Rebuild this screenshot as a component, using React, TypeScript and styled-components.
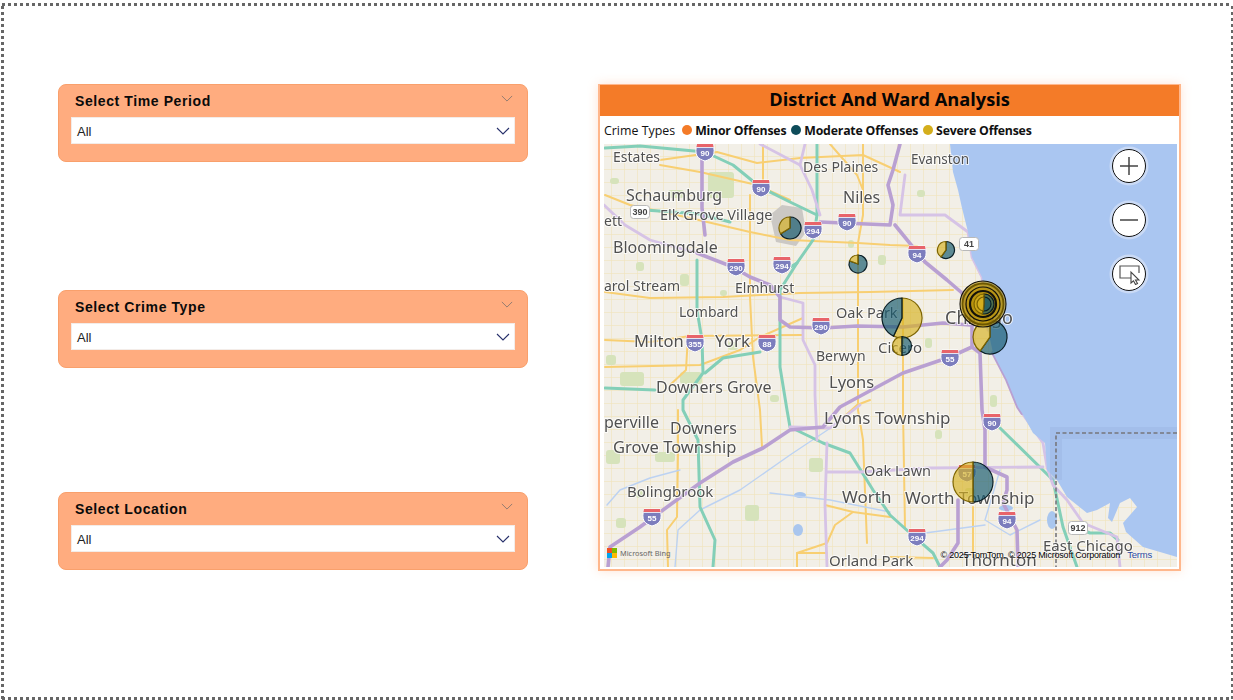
import React from 'react';
import styled, { createGlobalStyle } from 'styled-components';

const GlobalStyle = createGlobalStyle`
  html, body { margin: 0; padding: 0; background: #fff; }
  body { font-family: "Liberation Sans", Arial, sans-serif; }
`;

const Page = styled.div`
  width: 1233px;
  height: 700px;
  box-sizing: border-box;
  padding: 84px 52px 0 58px;
  display: flex;
  gap: 70px;
  overflow: hidden;
  background-color: #fff;
  background-image:
    repeating-linear-gradient(90deg, #666 0 3px, transparent 3px 6px),
    repeating-linear-gradient(90deg, #666 0 3px, transparent 3px 6px),
    repeating-linear-gradient(0deg, #666 0 3px, transparent 3px 6px),
    repeating-linear-gradient(0deg, #666 0 3px, transparent 3px 6px);
  background-size: 1230px 3px, 1230px 3px, 3px 696px, 2px 696px;
  background-position: 2px 3px, 2px 697px, 1px 3px, 1231px 3px;
  background-repeat: no-repeat;
`;

const FilterColumn = styled.div`
  width: 470px;
  display: flex;
  flex-direction: column;
`;

const FilterCard = styled.div<{ $top?: number }>`
  height: 78px;
  box-sizing: border-box;
  margin-top: ${(p) => p.$top ?? 0}px;
  padding: 6px 12px 0 12px;
  background: #ffac7f;
  border: 1px solid #f9a06c;
  border-radius: 8px;
`;

const FilterHeader = styled.div`
  height: 26px;
  padding: 0 2px 0 4px;
  display: flex;
  justify-content: space-between;
  align-items: flex-start;
`;

const FilterTitle = styled.span`
  font-size: 14px;
  font-weight: 700;
  line-height: 21px;
  letter-spacing: 0.6px;
  color: #0a0a0a;
`;

const FilterSelect = styled.div`
  height: 27px;
  box-sizing: border-box;
  display: flex;
  align-items: center;
  justify-content: space-between;
  padding: 2px 4px 0 5px;
  background: #fff;
  border: 1px solid #f3ece8;
  font-size: 13px;
  color: #222;
`;

const Chevron = styled.svg<{ $muted?: boolean }>`
  width: ${(p) => (p.$muted ? 12 : 14)}px;
  height: ${(p) => (p.$muted ? 7 : 8)}px;
  margin-top: ${(p) => (p.$muted ? 4 : -2)}px;
  fill: none;
  stroke: ${(p) => (p.$muted ? '#8d7a70' : '#27306b')};
  stroke-width: 1.1;
`;

const MapCard = styled.section`
  width: 583px;
  height: 487px;
  box-sizing: border-box;
  background: #fff;
  border: 2px solid #ffb78c;
  border-top-width: 1px;
  box-shadow: 0 0 10px rgba(255, 170, 120, 0.32);
  display: flex;
  flex-direction: column;
`;

const MapTitle = styled.h2`
  margin: 0;
  height: 31px;
  background: #f47b28;
  color: #050505;
  font-family: "Open Sans", sans-serif;
  font-size: 18.2px;
  font-weight: 700;
  line-height: 28px;
  text-align: center;
`;

const Legend = styled.div`
  height: 28px;
  padding-left: 4px;
  display: flex;
  align-items: center;
  font-family: "Open Sans", sans-serif;
  font-size: 12.4px;
  color: #111;
`;

const LegendItem = styled.span<{ $color: string }>`
  display: inline-flex;
  align-items: center;
  gap: 3px;
  margin-left: 7px;
  font-size: 12.3px;
  font-weight: 700;
  letter-spacing: -0.2px;
  & + & { margin-left: 5px; }
  &::before {
    content: '';
    width: 10px;
    height: 10px;
    border-radius: 50%;
    background: ${(p) => p.$color};
  }
`;

const MapPane = styled.div`
  position: relative;
  width: 573px;
  height: 423px;
  margin-left: 4px;
  overflow: hidden;
`;

const MapSvg = styled.svg`
  display: block;
  width: 573px;
  height: 423px;
  filter: blur(0.3px);
`;

const Road = styled.polyline<{ $kind: string }>`
  fill: none;
  stroke-linejoin: round;
  stroke-linecap: round;
  stroke: ${(p) =>
    ({ major: '#b9a0d2', light: '#d6c3e6', teal: '#83cfb8', yellow: '#f8cf72', river: '#bcd2f2' } as Record<string, string>)[p.$kind]};
  stroke-width: ${(p) =>
    ({ major: 3.6, light: 2.8, teal: 3, yellow: 2, river: 1.4 } as Record<string, number>)[p.$kind]};
`;

const PlaceLabel = styled.text`
  font-family: "Noto Sans", sans-serif;
  fill: #505050;
  stroke: rgba(255, 255, 255, 0.75);
  stroke-width: 2px;
  paint-order: stroke;
`;

const ShieldText = styled.text<{ $size?: number }>`
  font-family: "Liberation Sans", sans-serif;
  font-size: ${(p) => p.$size ?? 8}px;
  font-weight: 700;
  text-anchor: middle;
`;

const ZoomControls = styled.div`
  position: absolute;
  top: 5px;
  right: 31px;
  display: flex;
  flex-direction: column;
  gap: 20px;
`;

const ZoomButton = styled.div`
  width: 34px;
  height: 34px;
  box-sizing: border-box;
  border-radius: 50%;
  background: #fff;
  border: 1.5px solid #111;
  box-shadow: 0 0 0 2.5px rgba(205, 220, 245, 0.9);
  display: flex;
  align-items: center;
  justify-content: center;
  svg { display: block; }
`;

const BingMark = styled.div`
  position: absolute;
  left: 3px;
  bottom: 9px;
  display: flex;
  align-items: center;
  gap: 3px;
  font-family: "Noto Sans", sans-serif;
  font-size: 7.4px;
  color: #666;
`;

const BingTiles = styled.div`
  display: grid;
  grid-template-columns: 5px 5px;
  grid-auto-rows: 5px;
`;

const Tile = styled.i<{ $color: string }>`
  background: ${(p) => p.$color};
`;

const Attribution = styled.div`
  position: absolute;
  right: 25px;
  bottom: 6px;
  display: flex;
  gap: 7px;
  font-size: 9px;
  letter-spacing: -0.2px;
  line-height: 12px;
  color: #000;
  text-shadow: 0 0 2px #fff;
`;

const TermsLink = styled.span`
  color: #2a4aa0;
  font-size: 9.5px;
`;

const roads: { kind: string; pts: string }[] = [
  // minor arterials first so that highways sit on top
  { kind: 'yellow', pts: '605,195 630,205 690,218 750,232 790,240 858,243 890,245 917,246' },
  { kind: 'yellow', pts: '660,165 700,172 757,185 790,200' },
  { kind: 'yellow', pts: '660,160 717,152 757,163 800,158 863,155 900,172' },
  { kind: 'yellow', pts: '763,144 763,182' },
  { kind: 'yellow', pts: '750,195 750,297 753,357 760,410 762,447' },
  { kind: 'yellow', pts: '830,144 857,175 863,190' },
  { kind: 'yellow', pts: '863,144 863,215 858,243 858,410 863,440 867,543' },
  { kind: 'yellow', pts: '605,292 650,298 723,297 800,293 870,292 953,290' },
  { kind: 'yellow', pts: '605,340 650,342 690,336 803,335' },
  { kind: 'yellow', pts: '605,367 700,365 740,350 760,337 803,318' },
  { kind: 'yellow', pts: '688,335 686,370 670,385' },
  { kind: 'yellow', pts: '678,410 678,453 677,517 667,530 668,567' },
  { kind: 'yellow', pts: '903,300 903,410 905,527' },
  { kind: 'yellow', pts: '973,507 973,557' },
  { kind: 'yellow', pts: '825,505 853,512 890,517' },
  { kind: 'yellow', pts: '853,512 835,525 827,543 797,553 797,567' },
  { kind: 'yellow', pts: '797,553 827,553' },
  { kind: 'yellow', pts: '890,557 933,558' },
  { kind: 'yellow', pts: '835,425 857,405 870,400' },
  { kind: 'river', pts: '1000,470 985,520 1010,535 1040,520' },
  { kind: 'river', pts: '675,567 678,530 700,510 740,490 790,455 835,425' },
  { kind: 'river', pts: '770,493 830,500 890,512' },
  { kind: 'river', pts: '607,505 620,490 650,478 680,470' },
  { kind: 'river', pts: '925,533 985,525' },
  // toll roads
  { kind: 'teal', pts: '605,148 640,146 705,152 733,165 760,187 790,202 817,215' },
  { kind: 'teal', pts: '817,144 817,215 813,240 797,263 782,272' },
  { kind: 'teal', pts: '797,263 780,290 780,367 787,410 790,427 823,443 850,453 873,490 890,515 910,533 933,553 940,567' },
  { kind: 'teal', pts: '697,260 697,310 702,340 703,373 683,400 683,410 698,440 700,507 715,540 713,567' },
  { kind: 'teal', pts: '705,373 723,358 760,352' },
  { kind: 'teal', pts: '605,388 655,390' },
  { kind: 'teal', pts: '645,210 700,214 730,222' },
  { kind: 'teal', pts: '1000,428 1053,480 1063,527 1077,567' },
  { kind: 'teal', pts: '1075,527 1090,533 1110,533 1118,540' },
  // light ramps
  { kind: 'light', pts: '805,144 800,165 812,190 820,215' },
  { kind: 'light', pts: '760,144 800,165' },
  { kind: 'light', pts: '604,205 625,225 650,240 697,253' },
  { kind: 'light', pts: '780,297 803,303 803,340 815,365 815,395 817,440' },
  { kind: 'light', pts: '790,427 830,428 860,405' },
  { kind: 'light', pts: '827,472 860,472 930,468 1043,467' },
  { kind: 'light', pts: '1022,413 1043,443 1047,467 1053,485 1067,500 1083,523 1117,537 1120,567' },
  // expressways
  { kind: 'major', pts: '702,158 702,208 705,235' },
  { kind: 'major', pts: '820,222 890,225 893,205 888,185 893,170 900,144' },
  { kind: 'major', pts: '895,225 925,262 947,280 962,293 972,323 972,347 980,353 982,410 985,430 985,467 1007,477 1007,490 1003,503 1017,530 1018,567' },
  { kind: 'major', pts: '697,253 733,267 750,277 770,285 780,297 780,320 790,327 823,328 857,326 903,327 943,323 970,325' },
  { kind: 'major', pts: '972,347 950,357 903,373 840,407 823,427 790,430 763,448 733,462 700,483 663,510 640,527 610,547 608,567' },
  { kind: 'major', pts: '958,500 958,543 947,560 940,567' },
  { kind: 'light', pts: '827,567 825,505 827,443' },
  { kind: 'light', pts: '905,175 900,215 945,215 968,232 972,257 982,277 988,330' },
  { kind: 'major', pts: '993,353 1007,380 1018,407 1022,413' },
];

const shields: { x: number; y: number; n: string }[] = [
  { x: 705, y: 152, n: '90' },
  { x: 761, y: 188, n: '90' },
  { x: 847, y: 222, n: '90' },
  { x: 813, y: 230, n: '294' },
  { x: 782, y: 265, n: '294' },
  { x: 736, y: 267, n: '290' },
  { x: 821, y: 326, n: '290' },
  { x: 917, y: 254, n: '94' },
  { x: 695, y: 343, n: '355' },
  { x: 767, y: 343, n: '88' },
  { x: 950, y: 358, n: '55' },
  { x: 652, y: 517, n: '55' },
  { x: 992, y: 422, n: '90' },
  { x: 1007, y: 520, n: '94' },
  { x: 917, y: 537, n: '294' },
  { x: 967, y: 473, n: '57' },
];

const stateShields: { x: number; y: number; n: string }[] = [
  { x: 640, y: 212, n: '390' },
  { x: 969, y: 244, n: '41' },
  { x: 1078, y: 528, n: '912' },
];

const labels: { x: number; y: number; s: number; t: string }[] = [
  { x: 613, y: 162, s: 14, t: 'Estates' },
  { x: 803, y: 172, s: 14, t: 'Des Plaines' },
  { x: 911, y: 164, s: 13.5, t: 'Evanston' },
  { x: 626, y: 201, s: 16, t: 'Schaumburg' },
  { x: 843, y: 203, s: 16, t: 'Niles' },
  { x: 660, y: 220, s: 14.5, t: 'Elk Grove Village' },
  { x: 604, y: 226, s: 14, t: 'ett' },
  { x: 613, y: 253, s: 16, t: 'Bloomingdale' },
  { x: 604, y: 291, s: 14, t: 'arol Stream' },
  { x: 735, y: 293, s: 14, t: 'Elmhurst' },
  { x: 679, y: 317, s: 14, t: 'Lombard' },
  { x: 836, y: 318, s: 14.5, t: 'Oak Park' },
  { x: 945, y: 324, s: 18, t: 'Chicago' },
  { x: 634, y: 347, s: 16.5, t: 'Milton' },
  { x: 715, y: 347, s: 17, t: 'York' },
  { x: 878, y: 353, s: 15, t: 'Cicero' },
  { x: 816, y: 361, s: 14, t: 'Berwyn' },
  { x: 656, y: 393, s: 16, t: 'Downers Grove' },
  { x: 829, y: 388, s: 16.5, t: 'Lyons' },
  { x: 824, y: 424, s: 17, t: 'Lyons Township' },
  { x: 604, y: 428, s: 16, t: 'perville' },
  { x: 670, y: 434, s: 16, t: 'Downers' },
  { x: 613, y: 453, s: 16.5, t: 'Grove Township' },
  { x: 864, y: 476, s: 14.5, t: 'Oak Lawn' },
  { x: 627, y: 497, s: 15, t: 'Bolingbrook' },
  { x: 842, y: 503, s: 17, t: 'Worth' },
  { x: 905, y: 504, s: 17, t: 'Worth Township' },
  { x: 829, y: 566, s: 15, t: 'Orland Park' },
  { x: 1043, y: 551, s: 15, t: 'East Chicago' },
  { x: 962, y: 566, s: 17, t: 'Thornton' },
];

const parks: { x: number; y: number; w: number; h: number }[] = [
  { x: 708, y: 172, w: 26, h: 26 },
  { x: 668, y: 190, w: 16, h: 8 },
  { x: 606, y: 450, w: 14, h: 14 },
  { x: 655, y: 452, w: 20, h: 10 },
  { x: 809, y: 458, w: 14, h: 14 },
  { x: 620, y: 372, w: 24, h: 14 },
  { x: 680, y: 372, w: 22, h: 12 },
  { x: 728, y: 342, w: 10, h: 8 },
  { x: 680, y: 274, w: 9, h: 12 },
  { x: 745, y: 505, w: 14, h: 16 },
  { x: 606, y: 355, w: 10, h: 10 },
  { x: 965, y: 488, w: 10, h: 9 },
  { x: 878, y: 255, w: 8, h: 10 },
  { x: 925, y: 338, w: 7, h: 10 },
  { x: 990, y: 395, w: 7, h: 12 },
  { x: 1043, y: 415, w: 8, h: 10 },
  { x: 636, y: 262, w: 8, h: 9 },
  { x: 720, y: 290, w: 7, h: 6 },
  { x: 610, y: 178, w: 9, h: 6 },
  { x: 770, y: 395, w: 9, h: 7 },
  { x: 636, y: 490, w: 7, h: 8 },
  { x: 616, y: 518, w: 10, h: 10 },
  { x: 848, y: 240, w: 6, h: 8 },
  { x: 917, y: 190, w: 8, h: 7 },
  { x: 935, y: 430, w: 7, h: 9 },
];

// angles are degrees clockwise from 12 o'clock
const wedge = (cx: number, cy: number, r: number, from: number, to: number): string => {
  const pt = (a: number) => {
    const rad = ((a - 90) * Math.PI) / 180;
    return `${(cx + r * Math.cos(rad)).toFixed(2)} ${(cy + r * Math.sin(rad)).toFixed(2)}`;
  };
  const large = to - from > 180 ? 1 : 0;
  return `M${cx} ${cy}L${pt(from)}A${r} ${r} 0 ${large} 1 ${pt(to)}Z`;
};

const PieSlice = styled.path<{ $severe?: boolean }>`
  fill: ${(p) => (p.$severe ? 'rgba(214, 178, 34, 0.66)' : 'rgba(24, 92, 110, 0.68)')};
  stroke: ${(p) => (p.$severe ? '#7d6400' : '#0a1e26')};
  stroke-width: 1.2;
`;

const RingCircle = styled.circle<{ $weight: number; $dark?: boolean }>`
  fill: rgba(182, 146, 10, 0.62);
  stroke: ${(p) => (p.$dark ? '#14120a' : '#6d5700')};
  stroke-width: ${(p) => p.$weight};
`;

// teal covers 0..split, the severe share the rest of the circle
const Pie = ({ x, y, r, split }: { x: number; y: number; r: number; split: number }) => (
  <g>
    <PieSlice d={wedge(x, y, r, 0, split)} />
    <PieSlice $severe d={wedge(x, y, r, split, 360)} />
  </g>
);

const pies = [
  { x: 790, y: 228, r: 11, split: 238 },
  { x: 858, y: 264, r: 9, split: 290 },
  { x: 946, y: 250, r: 8.5, split: 215 },
  { x: 990, y: 337, r: 17, split: 215 },
  { x: 973, y: 482, r: 20, split: 180 },
];

const rings = [
  { r: 23, w: 1.1, dark: true },
  { r: 20.5, w: 1.8, dark: false },
  { r: 17, w: 1.2, dark: true },
  { r: 13, w: 2.2, dark: true },
];

const Shield = ({ x, y, n }: { x: number; y: number; n: string }) => (
  <g transform={`translate(${x} ${y})`}>
    <path d="M-8-8H8C9.5-3 9.5 1 8 4 6 7 3 8 0 9-3 8-6 7-8 4-9.5 1-9.5-3-8-8Z" fill="#7c7dbd" stroke="#fff" strokeWidth="1" />
    <path d="M-8-8H8L8.6-5H-8.6Z" fill="#e8646a" />
    <path d="M-8.6-4.5H8.6" stroke="#fff" strokeWidth="0.8" />
    <ShieldText y={4} fill="#fff">{n}</ShieldText>
  </g>
);

const StateShield = ({ x, y, n }: { x: number; y: number; n: string }) => (
  <g transform={`translate(${x} ${y})`}>
    <rect x={-9.5} y={-6.5} width={19} height={13} rx={3} fill="#fff" stroke="#b9b9b9" />
    <ShieldText $size={9} y={3.2} fill="#444">{n}</ShieldText>
  </g>
);

const MapDrawing = () => (
  <MapSvg viewBox="604 144 573 423">
    <defs>
      <pattern id="streets" width="13" height="13" patternUnits="userSpaceOnUse">
        <path d="M0 .5H13M.5 0V13" stroke="#f0e3ba" strokeWidth="0.8" fill="none" opacity="0.75" />
      </pattern>
    </defs>
    <rect x={604} y={144} width={573} height={423} fill="#f2efe7" />
    <rect x={604} y={144} width={573} height={423} fill="url(#streets)" />
    {parks.map((p, i) => (
      <rect key={i} x={p.x} y={p.y} width={p.w} height={p.h} rx={3} fill="#d6e3bb" />
    ))}
    <path d="M770 215L782 205 802 208 806 232 796 246 776 242Z" fill="#cbc8c4" />
    <ellipse cx={800} cy={495} rx={6} ry={3} fill="#a9c6ee" />
    <ellipse cx={798} cy={530} rx={5} ry={6} fill="#a9c6ee" />
    <ellipse cx={1006} cy={508} rx={7} ry={3} fill="#a9c6ee" />
    <ellipse cx={1052} cy={520} rx={5} ry={9} fill="#a9c6ee" />
    {roads.map((r, i) => (
      <Road key={i} $kind={r.kind} points={r.pts} />
    ))}
    <path
      d="M950 144L953 172 958 190 962 208 968 232 972 257 982 277 986 300 987 325 993 353 1007 380 1018 407 1022 413 1033 433 1045 443 1047 470 1057 480 1067 497 1087 513 1097 510 1110 503 1108 518 1112 522 1120 503 1130 498 1137 507 1123 523 1126 532 1143 547 1177 557V144Z"
      fill="#aac6f1"
    />
    <path d="M1177 433H1056V480" fill="none" stroke="#9db8e4" strokeWidth="12" opacity="0.55" />
    <path d="M1177 433H1056V567" fill="none" stroke="#77777c" strokeWidth="1.6" strokeDasharray="4 2.5" />
    {shields.map((s, i) => (
      <Shield key={i} {...s} />
    ))}
    {stateShields.map((s, i) => (
      <StateShield key={i} {...s} />
    ))}
    {labels.map((l, i) => (
      <PlaceLabel key={i} x={l.x} y={l.y} fontSize={l.s}>
        {l.t}
      </PlaceLabel>
    ))}
    {pies.map((p, i) => (
      <Pie key={i} {...p} />
    ))}
    {/* the Oak Park pie is mostly severe, drawn from the right side round */}
    <PieSlice $severe d={wedge(902, 318, 20, 0, 205)} />
    <PieSlice d={wedge(902, 318, 20, 205, 360)} />
    <PieSlice $severe d={wedge(902, 346, 9.5, 180, 360)} />
    <PieSlice d={wedge(902, 346, 9.5, 0, 180)} />
    {rings.map((c) => (
      <RingCircle key={c.r} cx={983} cy={304} r={c.r} $weight={c.w} $dark={c.dark} />
    ))}
    <Pie x={984} y={304} r={10} split={190} />
    <Pie x={984} y={304} r={7} split={185} />
  </MapSvg>
);

const SelectChevron = ({ muted }: { muted?: boolean }) => (
  <Chevron $muted={muted} viewBox="0 0 14 8">
    <polyline points="1,1 7,7 13,1" />
  </Chevron>
);

const filters = [
  { title: 'Select Time Period', top: 0 },
  { title: 'Select Crime Type', top: 128 },
  { title: 'Select Location', top: 124 },
];

export default function App() {
  return (
    <>
      <GlobalStyle />
      <Page>
        <FilterColumn>
          {filters.map((f) => (
            <FilterCard key={f.title} $top={f.top}>
              <FilterHeader>
                <FilterTitle>{f.title}</FilterTitle>
                <SelectChevron muted />
              </FilterHeader>
              <FilterSelect>
                All
                <SelectChevron />
              </FilterSelect>
            </FilterCard>
          ))}
        </FilterColumn>
        <MapCard>
          <MapTitle>District And Ward Analysis</MapTitle>
          <Legend>
            Crime Types
            <LegendItem $color="#f47b28">Minor Offenses</LegendItem>
            <LegendItem $color="#0e4c5a">Moderate Offenses</LegendItem>
            <LegendItem $color="#d4ae1c">Severe Offenses</LegendItem>
          </Legend>
          <MapPane>
            <MapDrawing />
            <ZoomControls>
              <ZoomButton>
                <svg width="22" height="22" viewBox="0 0 22 22" fill="none" stroke="#444" strokeWidth="1.5">
                  <path d="M2 11H20M11 2V20" />
                </svg>
              </ZoomButton>
              <ZoomButton>
                <svg width="22" height="22" viewBox="0 0 22 22" fill="none" stroke="#444" strokeWidth="1.5">
                  <path d="M2 11H20" />
                </svg>
              </ZoomButton>
              <ZoomButton>
                <svg width="22" height="22" viewBox="0 0 22 22" fill="none">
                  <path d="M14 15H2V3H21V10" stroke="#555" strokeWidth="1.2" />
                  <path d="M13 9V20L15.5 17.8 17.5 21.5 19.5 20.5 17.5 17H21Z" fill="#fff" stroke="#444" strokeWidth="1.1" />
                </svg>
              </ZoomButton>
            </ZoomControls>
            <BingMark>
              <BingTiles>
                <Tile $color="#f25022" />
                <Tile $color="#7fba00" />
                <Tile $color="#00a4ef" />
                <Tile $color="#ffb900" />
              </BingTiles>
              Microsoft Bing
            </BingMark>
            <Attribution>
              <span>© 2025 TomTom, © 2025 Microsoft Corporation</span>
              <TermsLink>Terms</TermsLink>
            </Attribution>
          </MapPane>
        </MapCard>
      </Page>
    </>
  );
}
